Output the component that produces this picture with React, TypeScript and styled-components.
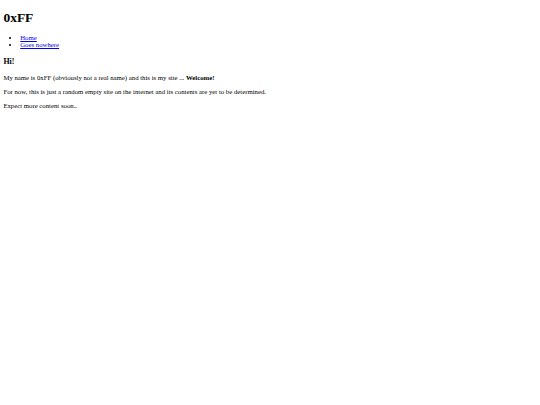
import React from "react";
import styled, { createGlobalStyle } from "styled-components";

const Global = createGlobalStyle`
  html, body { background: #ffffff; }
  body {
    margin: 3.375px;
    font-family: "Liberation Serif", "Times New Roman", serif;
    font-size: 6.75px;
    color: #000000;
  }
`;

const Title = styled.h1`
  font-size: 13.5px;
  font-weight: bold;
  margin: 6.5px 0 8.5px;
`;

const NavList = styled.ul`
  margin: 6.75px 0;
  padding-left: 16.875px;
  list-style: disc;
`;

const NavItem = styled.li`
  font-size: 6.75px;
`;

const NavLink = styled.a`
  color: #0000ee;
  text-decoration: underline;
`;

const Heading = styled.h3`
  font-size: 7.8975px;
  font-weight: bold;
  margin: 8.9px 0 7.9px;
`;

const Para = styled.p`
  margin: 6.75px 0;
`;

export default function App() {
  return (
    <>
      <Global />
      <Title>0xFF</Title>
      <NavList>
        <NavItem>
          <NavLink href="#">Home</NavLink>
        </NavItem>
        <NavItem>
          <NavLink href="#">Goes nowhere</NavLink>
        </NavItem>
      </NavList>
      <Heading>Hi!</Heading>
      <Para>
        My name is 0xFF (obviously not a real name) and this is my site ... <b>Welcome!</b>
      </Para>
      <Para>
        For now, this is just a random empty site on the internet and its contents are yet to be determined.
      </Para>
      <Para>Expect more content soon..</Para>
    </>
  );
}
